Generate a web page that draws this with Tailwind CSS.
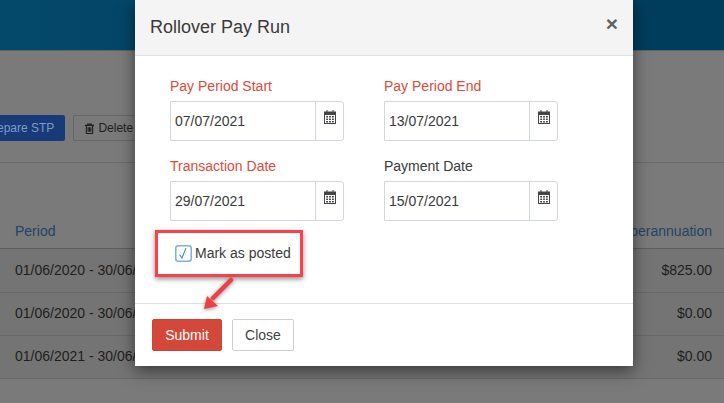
<!DOCTYPE html>
<html lang="en">
<head>
    <meta charset="UTF-8">
    <meta name="viewport" content="width=device-width, initial-scale=1.0">
    <title>Rollover Pay Run</title>
    <script src="https://cdn.jsdelivr.net/npm/@tailwindcss/browser@4"></script>
</head>
<body class="bg-[#7a7a7a] font-['Liberation_Sans',Arial,sans-serif] text-sm text-[#1e1e1e] overflow-hidden">
<div class="relative w-[724px] h-[403px] overflow-hidden">
    <!-- Page behind the modal -->
    <div class="h-[51px] bg-[linear-gradient(to_right,#04486a,#003c5c)] border-b border-[#5c6468]"></div>
    <div class="flex gap-2 items-start ml-[-26px] mt-[64px] h-[48px] border-b border-[#6a6a6a] text-xs">
        <div class="h-[26px] px-[11px] flex items-center rounded-[2px] bg-[#173a78] text-[#7f9ac4]">Prepare STP</div>
        <div class="h-[26px] pl-[11px] pr-[10px] flex items-center gap-[4px] rounded-[2px] border border-[#666] text-[#1e1e1e]">
            <svg class="w-[9px] h-[11px]" viewBox="0 0 10 12" fill="none" stroke="#1e1e1e" stroke-width="1.2"><path d="M0 2.5h10M3 2.5V1h4v1.5M1.5 2.5v9h7v-9M3.5 4.5v5M5 4.5v5M6.5 4.5v5"/></svg>
            Delete
        </div>
    </div>
    <div class="mt-[57px] flex justify-between items-center h-[29px] pb-[7px] pl-[15px] pr-[12px] border-b border-[#5e5e5e] text-[#234266]">
        <span>Period</span><span>Superannuation</span>
    </div>
    <div class="flex justify-between items-center h-[44px] pb-[2px] pl-[15px] pr-[12px] bg-[#747474] border-b border-[#686868]"><span>01/06/2020 - 30/06/2020</span><span>$825.00</span></div>
    <div class="flex justify-between items-center h-[43px] pb-[2px] pl-[15px] pr-[12px] bg-[#747474] border-b border-[#686868]"><span>01/06/2020 - 30/06/2020</span><span>$0.00</span></div>
    <div class="flex justify-between items-center h-[43px] pb-[2px] pl-[15px] pr-[12px] bg-[#747474] border-b border-[#686868]"><span>01/06/2021 - 30/06/2021</span><span>$0.00</span></div>

    <!-- Modal -->
    <div class="absolute left-[135px] top-0 w-[498px] h-[366px] bg-white flex flex-col shadow-[0_5px_15px_rgba(0,0,0,0.5)] text-[#3a3a3a]">
        <div class="h-[56px] shrink-0 flex items-center justify-between pl-[15px] pr-[15px] bg-[#f4f4f4] border-b border-[#e0e0e0]">
            <span class="text-[18px]">Rollover Pay Run</span>
            <span class="text-[21px] font-bold leading-none text-[#616161] mt-[-8px]">×</span>
        </div>
        <div class="h-[247px] shrink-0 pl-[35px] pt-[20px]">
            <div class="grid grid-cols-[174px_174px] gap-x-[40px] gap-y-[15px]">
                <div>
                    <label class="block h-[25px] text-[#dd4b39]">Pay Period Start</label>
                    <div class="flex h-[40px] border border-[#d2d6de] rounded-r-[3px]">
                        <div class="flex-1 flex items-center pl-1">07/07/2021</div>
                        <div class="w-[28px] flex justify-center pt-[8px] border-l border-[#d2d6de]">
                            <svg class="w-[12px] h-[14px]" viewBox="0 0 12 14"><path fill="#444" fill-rule="evenodd" d="M0 1.5h12V14H0zM1 5v8h10V5zM2.2 6h1.8v1.6H2.2zM5.1 6h1.8v1.6H5.1zM8 6h1.8v1.6H8zM2.2 8.5h1.8v1.6H2.2zM5.1 8.5h1.8v1.6H5.1zM8 8.5h1.8v1.6H8zM2.2 11h1.8v1.4H2.2zM5.1 11h1.8v1.4H5.1zM8 11h1.8v1.4H8z"/><path fill="#444" d="M2.5 0h1v2h-1zM8.5 0h1v2h-1z"/></svg>
                        </div>
                    </div>
                </div>
                <div>
                    <label class="block h-[25px] text-[#dd4b39]">Pay Period End</label>
                    <div class="flex h-[40px] border border-[#d2d6de] rounded-r-[3px]">
                        <div class="flex-1 flex items-center pl-1">13/07/2021</div>
                        <div class="w-[28px] flex justify-center pt-[8px] border-l border-[#d2d6de]">
                            <svg class="w-[12px] h-[14px]" viewBox="0 0 12 14"><path fill="#444" fill-rule="evenodd" d="M0 1.5h12V14H0zM1 5v8h10V5zM2.2 6h1.8v1.6H2.2zM5.1 6h1.8v1.6H5.1zM8 6h1.8v1.6H8zM2.2 8.5h1.8v1.6H2.2zM5.1 8.5h1.8v1.6H5.1zM8 8.5h1.8v1.6H8zM2.2 11h1.8v1.4H2.2zM5.1 11h1.8v1.4H5.1zM8 11h1.8v1.4H8z"/><path fill="#444" d="M2.5 0h1v2h-1zM8.5 0h1v2h-1z"/></svg>
                        </div>
                    </div>
                </div>
                <div>
                    <label class="block h-[25px] text-[#dd4b39]">Transaction Date</label>
                    <div class="flex h-[40px] border border-[#d2d6de] rounded-r-[3px]">
                        <div class="flex-1 flex items-center pl-1">29/07/2021</div>
                        <div class="w-[28px] flex justify-center pt-[8px] border-l border-[#d2d6de]">
                            <svg class="w-[12px] h-[14px]" viewBox="0 0 12 14"><path fill="#444" fill-rule="evenodd" d="M0 1.5h12V14H0zM1 5v8h10V5zM2.2 6h1.8v1.6H2.2zM5.1 6h1.8v1.6H5.1zM8 6h1.8v1.6H8zM2.2 8.5h1.8v1.6H2.2zM5.1 8.5h1.8v1.6H5.1zM8 8.5h1.8v1.6H8zM2.2 11h1.8v1.4H2.2zM5.1 11h1.8v1.4H5.1zM8 11h1.8v1.4H8z"/><path fill="#444" d="M2.5 0h1v2h-1zM8.5 0h1v2h-1z"/></svg>
                        </div>
                    </div>
                </div>
                <div>
                    <label class="block h-[25px]">Payment Date</label>
                    <div class="flex h-[40px] border border-[#d2d6de] rounded-r-[3px]">
                        <div class="flex-1 flex items-center pl-1">15/07/2021</div>
                        <div class="w-[28px] flex justify-center pt-[8px] border-l border-[#d2d6de]">
                            <svg class="w-[12px] h-[14px]" viewBox="0 0 12 14"><path fill="#444" fill-rule="evenodd" d="M0 1.5h12V14H0zM1 5v8h10V5zM2.2 6h1.8v1.6H2.2zM5.1 6h1.8v1.6H5.1zM8 6h1.8v1.6H8zM2.2 8.5h1.8v1.6H2.2zM5.1 8.5h1.8v1.6H5.1zM8 8.5h1.8v1.6H8zM2.2 11h1.8v1.4H2.2zM5.1 11h1.8v1.4H5.1zM8 11h1.8v1.4H8z"/><path fill="#444" d="M2.5 0h1v2h-1zM8.5 0h1v2h-1z"/></svg>
                        </div>
                    </div>
                </div>
            </div>
            <div class="flex items-center gap-[3px] ml-[5px] mt-[23px] h-[18px]">
                <svg class="w-[17px] h-[17px]" viewBox="0 0 17 17" fill="none"><rect x="0.75" y="0.75" width="15.5" height="15.5" rx="2.5" stroke="#7db0e4" stroke-width="1.5"/><path d="M4.5 9.5l2.5 3.5 4-10" stroke="#3d8be0" stroke-width="1.1"/></svg>
                <span>Mark as posted</span>
            </div>
        </div>
        <div class="flex-1 flex gap-[10px] pl-[17px] pt-[15px] border-t border-[#e0e0e0]">
            <div class="w-[70px] h-[32px] flex items-center justify-center rounded-[2px] bg-[#d4483a] border border-[#c9453a] text-white">Submit</div>
            <div class="w-[62px] h-[32px] flex items-center justify-center rounded-[2px] border border-[#d0d0d0] bg-white text-[#444]">Close</div>
        </div>
    </div>

    <!-- Annotation box and arrow -->
    <div class="absolute left-[155px] top-[230px] w-[148px] h-[47px] border-[3px] border-[#f8414a] shadow-[0_2px_5px_rgba(0,0,0,0.45)]"></div>
    <svg class="absolute left-[198px] top-[275px] w-[40px] h-[40px] drop-shadow-[0_1px_2px_rgba(0,0,0,0.45)]" viewBox="0 0 40 40">
        <path d="M33 5L15 23" stroke="#ee3f47" stroke-width="4.5" stroke-linecap="round"/>
        <path d="M6 34L9 21L20 31z" fill="#ee3f47"/>
    </svg>
</div>
</body>
</html>
